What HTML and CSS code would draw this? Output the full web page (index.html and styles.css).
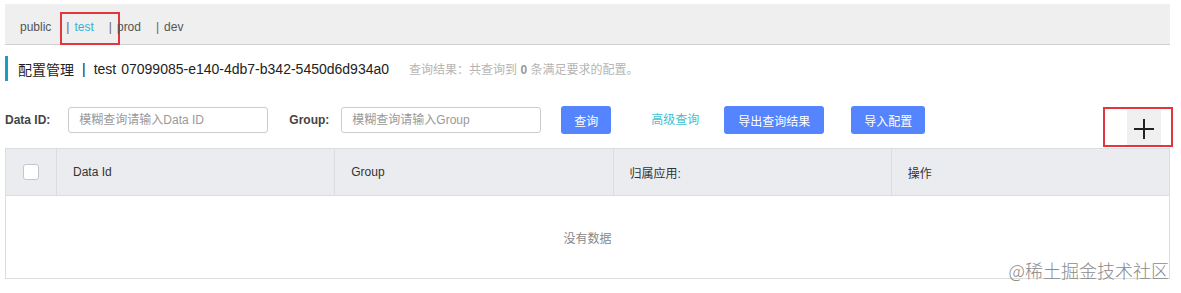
FILE: index.html
```html
<!DOCTYPE html>
<html lang="zh">
<head>
    <meta charset="UTF-8">
    <meta name="viewport" content="width=device-width, initial-scale=1.0">
    <title>配置管理</title>
    <link rel="stylesheet" href="styles.css">
</head>
<body>

    <div class="ns-bar">
        <span class="ns">public</span>
        <span class="ns ns-active"><span class="sep">|</span>test<span class="mark mark-tab"></span></span>
        <span class="ns"><span class="sep">|</span>prod</span>
        <span class="ns"><span class="sep">|</span>dev</span>
    </div>

    <div class="page-title">
        <span class="title-main">配置管理</span>
        <span class="title-sep">|</span>
        <span class="title-ns">test</span>
        <span class="title-id">07099085-e140-4db7-b342-5450d6d934a0</span>
        <span class="title-info">查询结果：共查询到 <b>0</b> 条满足要求的配置。</span>
    </div>

    <div class="search-row">
        <label class="field-label">Data ID:</label>
        <input type="text" class="field-input" placeholder="模糊查询请输入Data ID">
        <label class="field-label label-group">Group:</label>
        <input type="text" class="field-input" placeholder="模糊查询请输入Group">
        <button class="btn btn-query">查询</button>
        <a class="adv-link">高级查询</a>
        <button class="btn btn-export">导出查询结果</button>
        <button class="btn btn-import">导入配置</button>
        <div class="add-btn">
            <svg width="22" height="22" viewBox="0 0 22 22">
                <path d="M11 1 V21 M1 11 H21" stroke="#222" stroke-width="2" fill="none"/>
            </svg>
            <span class="mark mark-add"></span>
        </div>
    </div>

    <table class="cfg-table">
        <thead>
            <tr>
                <th class="col-check"><span class="checkbox"></span></th>
                <th>Data Id</th>
                <th>Group</th>
                <th>归属应用:</th>
                <th>操作</th>
            </tr>
        </thead>
        <tbody>
            <tr>
                <td class="empty" colspan="5">没有数据</td>
            </tr>
        </tbody>
    </table>

    <div class="watermark">@稀土掘金技术社区</div>

</body>
</html>
```

FILE: styles.css
```css
body {
    font-family: "Liberation Sans", "Noto Sans CJK SC", sans-serif;
    font-size: 12px;
    color: #333;
    background: #fff;
    margin: 0;
    padding: 4px 11px 0 5px;
    position: relative;
    height: 289px;
    overflow: hidden;
}
.ns-bar {
    display: flex;
    align-items: center;
    height: 34px;
    padding: 6px 0 0 15px;
    background-color: #efefef;
    border-bottom: 1px solid #cfcfcf;
}
.ns {
    position: relative;
    padding-right: 15px;
    line-height: 14px;
    color: #555;
}
.ns .sep {
    margin-right: 5px;
    color: #666;
}
.ns-active {
    color: #36b4d0;
}
.mark {
    position: absolute;
    border: 2px solid #e0373e;
}
.mark-tab {
    left: -6px;
    top: -8px;
    width: 56px;
    height: 29px;
}
.page-title {
    display: flex;
    align-items: center;
    margin-top: 11px;
    height: 25px;
    border-left: 3px solid #1f9bbf;
    padding-left: 10px;
    font-size: 14px;
    color: #222;
}
.title-sep {
    margin: 0 8px;
}
.title-ns {
    margin-right: 5px;
}
.title-info {
    margin-left: 20px;
    font-size: 12px;
    color: #b5b5b5;
}
.title-info b {
    color: #999;
}
.search-row {
    display: flex;
    align-items: flex-start;
    margin-top: 25px;
    height: 42px;
}
.field-label {
    line-height: 28px;
    font-size: 12px;
    font-weight: bold;
    color: #444;
    margin-right: 18px;
}
.label-group {
    margin-left: 21px;
    margin-right: 12px;
}
.field-input {
    width: 200px;
    height: 26px;
    box-sizing: border-box;
    margin-top: 1px;
    padding: 0 10px;
    border: 1px solid #ccc;
    border-radius: 3px;
    font-family: inherit;
    font-size: 12px;
}
.field-input::placeholder {
    color: #999;
}
.btn {
    height: 28px;
    padding: 0;
    border: none;
    border-radius: 3px;
    background-color: #5584ff;
    color: #fff;
    font-family: inherit;
    font-size: 12px;
    cursor: pointer;
}
.btn-query {
    width: 50px;
    margin-left: 20px;
}
.adv-link {
    margin-left: 40px;
    margin-right: 25px;
    line-height: 28px;
    color: #3bbfd2;
}
.btn-export {
    width: 100px;
}
.btn-import {
    width: 74px;
    margin-left: 27px;
}
.add-btn {
    position: relative;
    display: flex;
    align-items: center;
    justify-content: center;
    margin-left: auto;
    margin-right: 9px;
    margin-top: 4px;
    width: 34px;
    height: 37px;
    background-color: #f0f0f0;
}
.mark-add {
    left: -24px;
    right: -12px;
    top: -3px;
    bottom: 0;
}
.cfg-table {
    width: 100%;
    border-collapse: collapse;
    table-layout: fixed;
}
.cfg-table th {
    height: 46px;
    padding: 0 0 0 16px;
    border: 1px solid #dcdde0;
    background-color: #ebecef;
    text-align: left;
    font-weight: normal;
    color: #333;
}
.cfg-table .col-check {
    width: 51px;
    padding: 0;
    text-align: center;
    box-sizing: border-box;
}
.checkbox {
    display: inline-block;
    width: 14px;
    height: 14px;
    margin-top: 3px;
    border: 1px solid #c4c6cf;
    border-radius: 3px;
    background: #fff;
}
.cfg-table td {
    border: 1px solid #dcdcdc;
}
.empty {
    height: 82px;
    padding: 0;
    text-align: center;
    color: #888;
}
.watermark {
    position: absolute;
    right: 12px;
    top: 256px;
    font-family: "Noto Sans CJK SC", sans-serif;
    font-size: 18px;
    font-weight: 300;
    color: #8a8a8a;
    line-height: 28px;
}
```
